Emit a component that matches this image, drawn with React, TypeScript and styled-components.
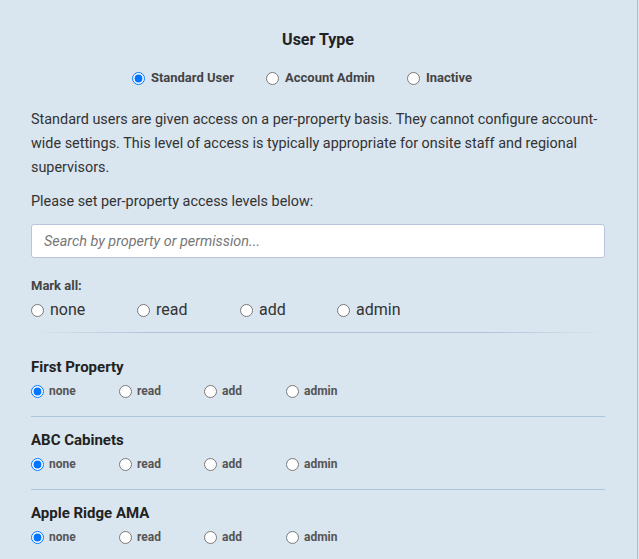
import React from "react";
import styled, { createGlobalStyle } from "styled-components";

const Global = createGlobalStyle`
  html, body { margin: 0; padding: 0; background: #d9e5ef; }
  body { font-family: Roboto, "Liberation Sans", sans-serif; color: #333; }
`;

const Panel = styled.div`
  box-sizing: border-box;
  width: 638px;
  height: 559px;
  overflow: hidden;
  border-right: 1px solid #a9bfd6;
  padding: 30px 32px 0 31px;
`;

const Title = styled.h2`
  margin: 0;
  text-align: center;
  font-size: 16px;
  line-height: 20px;
  font-weight: 700;
  color: #222;
`;

const TypeRow = styled.div`
  display: flex;
  justify-content: center;
  margin-top: 20px;
`;

const TypeOption = styled.label`
  display: flex;
  align-items: center;
  gap: 6px;
  margin-right: 32px;
  font-size: 13px;
  font-weight: 700;
  color: #444;
  line-height: 16px;
`;

const Radio = styled.input.attrs({ type: "radio" })`
  margin: 0;
  width: 13px;
  height: 13px;
`;

const Text = styled.p<{ $gap: number }>`
  margin: ${(p) => p.$gap}px 0 0;
  font-size: 14.4px;
  line-height: 24px;
  color: #333;
`;

const Search = styled.input`
  display: block;
  box-sizing: border-box;
  width: 100%;
  height: 34px;
  margin-top: 10px;
  padding: 0 12px;
  border: 1px solid #b9c5dd;
  border-radius: 3px;
  background: #fff;
  font-family: Roboto, "Liberation Sans", sans-serif;
  font-size: 14.4px;
  &::placeholder { color: #777; font-style: italic; }
`;

const SubLabel = styled.div`
  margin-top: 20px;
  font-size: 13px;
  font-weight: 700;
  line-height: 16px;
  color: #444;
`;

const LevelRow = styled.div<{ $big?: boolean }>`
  display: flex;
  align-items: center;
  margin-top: ${(p) => (p.$big ? "6px" : "5px")};
`;

const LevelOption = styled.label<{ $w: number; $big?: boolean }>`
  display: flex;
  align-items: center;
  gap: ${(p) => (p.$big ? "6px" : "5px")};
  width: ${(p) => p.$w}px;
  font-size: ${(p) => (p.$big ? "16px" : "12px")};
  font-weight: ${(p) => (p.$big ? 400 : 700)};
  color: ${(p) => (p.$big ? "#333" : "#555")};
  line-height: 20px;
`;

const FadeRule = styled.hr`
  border: 0;
  height: 1px;
  margin: 12px 0 0;
  background: linear-gradient(to right, rgba(180,194,217,0), #b4c2d9 20%, #b4c2d9 80%, rgba(180,194,217,0));
`;

const Property = styled.div<{ $first?: boolean }>`
  padding: ${(p) => (p.$first ? "25px" : "14px")} 0 15px;
  border-bottom: 1px solid #adc6de;
`;

const PropName = styled.div`
  font-size: 15px;
  font-weight: 700;
  line-height: 18px;
  color: #222;
`;

const bigWidths = [106, 103, 97, 80];
const smallWidths = [88, 85, 82, 80];
const levels = ["none", "read", "add", "admin"];

export default function App() {
  const props = ["First Property", "ABC Cabinets", "Apple Ridge AMA"];
  return (
    <Panel>
      <Global />
      <Title>User Type</Title>
      <TypeRow>
        <TypeOption><Radio name="ut" defaultChecked />Standard User</TypeOption>
        <TypeOption><Radio name="ut" />Account Admin</TypeOption>
        <TypeOption><Radio name="ut" />Inactive</TypeOption>
      </TypeRow>
      <Text $gap={22}>
        Standard users are given access on a per-property basis. They cannot configure account-wide settings. This level of access is typically appropriate for onsite staff and regional supervisors.
      </Text>
      <Text $gap={10}>Please set per-property access levels below:</Text>
      <Search placeholder="Search by property or permission..." />
      <SubLabel>Mark all:</SubLabel>
      <LevelRow $big>
        {levels.map((l, i) => (
          <LevelOption key={l} $w={bigWidths[i]} $big>
            <Radio name="all" />
            {l}
          </LevelOption>
        ))}
      </LevelRow>
      <FadeRule />
      {props.map((p, pi) => (
        <Property key={p} $first={pi === 0}>
          <PropName>{p}</PropName>
          <LevelRow>
            {levels.map((l, i) => (
              <LevelOption key={l} $w={smallWidths[i]}>
                <Radio name={"p" + pi} defaultChecked={i === 0} />
                {l}
              </LevelOption>
            ))}
          </LevelRow>
        </Property>
      ))}
    </Panel>
  );
}
